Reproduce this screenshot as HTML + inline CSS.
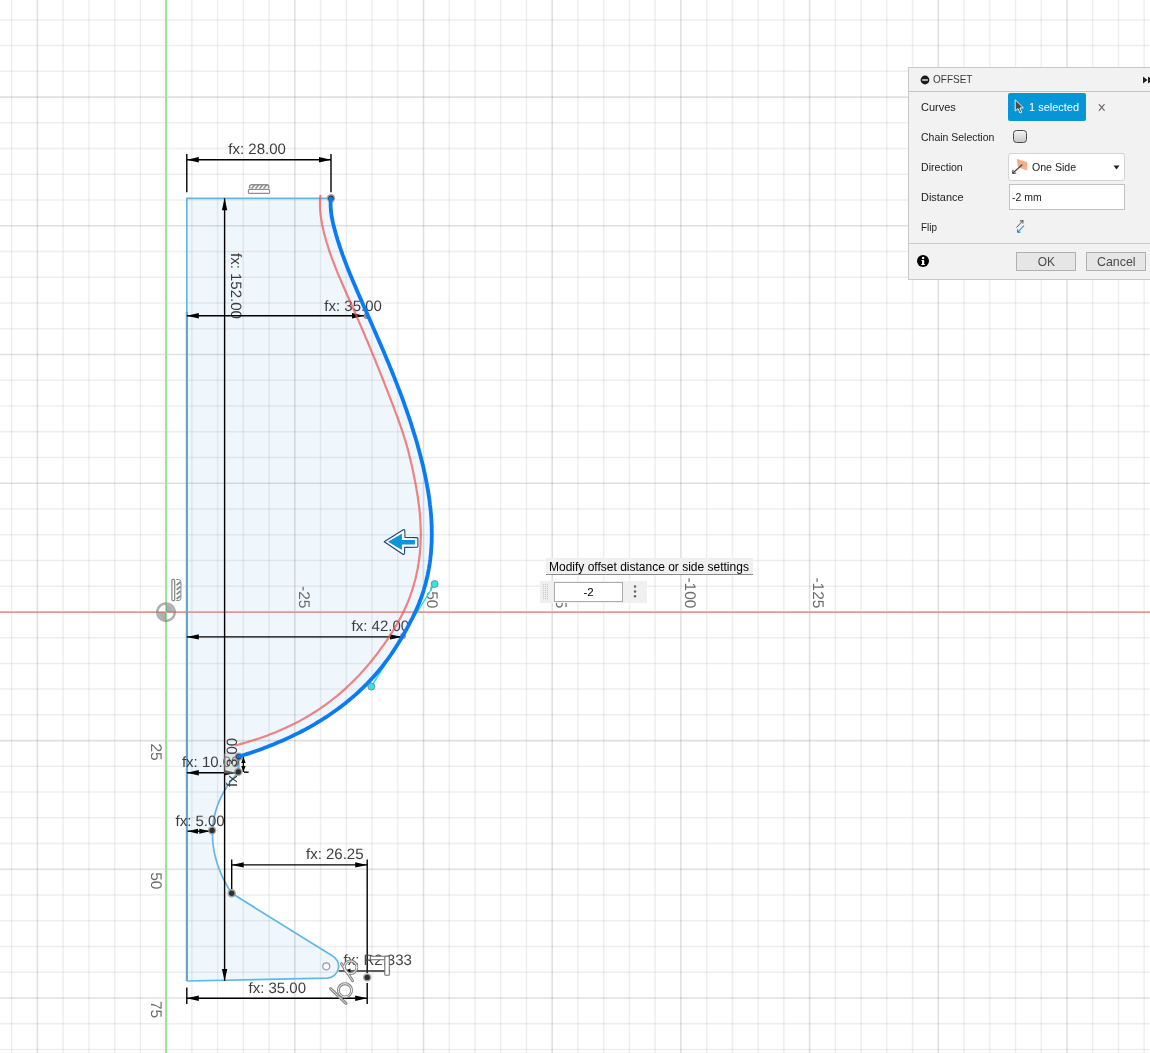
<!DOCTYPE html>
<html><head><meta charset="utf-8"><title>Offset sketch</title>
<style>
html,body{margin:0;padding:0;background:#fff;}
body{width:1150px;height:1053px;overflow:hidden;position:relative;font-family:"Liberation Sans",sans-serif;}
svg#cv{position:absolute;left:0;top:0;}
svg text{text-rendering:geometricPrecision}
#wrap{position:absolute;left:0;top:0;width:1150px;height:1053px;will-change:opacity;overflow:hidden}
.gm{stroke:#000;stroke-opacity:0.066;stroke-width:1.5}
.gM{stroke:#000;stroke-opacity:0.12;stroke-width:1.6}
.dim{stroke:#000;stroke-width:1.4;fill:none}
.dimt{font-family:"Liberation Sans",sans-serif;font-size:15px;fill:#3c3c3c}
.rul{font-family:"Liberation Sans",sans-serif;font-size:15.5px;fill:#6c6c6c}
.sk{stroke:#60b8e8;stroke-width:1.7;fill:none}
#panel{position:absolute;left:908px;top:67px;width:250px;height:213px;background:#f2f2f2;border:1px solid #c8c8c8;box-sizing:border-box;font-size:11.5px;color:#222;}
#panel .hd{height:24px;border-bottom:1px solid #c4c4c4;box-sizing:border-box;position:relative}
#panel .row{position:absolute;left:12px;}
.tip{position:absolute;left:546px;top:558px;width:207px;height:17px;background:#f0f0f0;border-bottom:1px solid #8a8a8a;box-sizing:border-box;font-size:12px;line-height:18px;color:#000;padding-left:3px;white-space:nowrap}
.hud{position:absolute;left:540px;top:581px;width:107px;height:22px;background:#f0f0f0}
.hud .in{position:absolute;left:14px;top:1px;width:69px;height:20px;box-sizing:border-box;border:1px solid #ababab;background:#fff;font-size:11.5px;line-height:19px;text-align:center;color:#000}
</style></head><body>
<div id="wrap">
<svg id="cv" width="1150" height="1053" viewBox="0 0 1150 1053">

<!-- profile fill -->
<path d="M186.8 198.3 L331 198.3 330.8 198.4 L330.6 201.5 L330.6 204.5 L330.7 207.6 L330.9 210.6 L331.3 213.7 L331.7 216.7 L332.3 219.7 L332.9 222.7 L333.6 225.6 L334.4 228.6 L335.2 231.5 L336.0 234.5 L336.9 237.4 L337.7 240.3 L338.7 243.2 L339.6 246.1 L340.6 249.0 L341.6 251.9 L342.6 254.8 L343.7 257.7 L344.7 260.5 L345.8 263.4 L346.9 266.2 L348.0 269.1 L349.2 271.9 L350.3 274.8 L351.5 277.6 L352.7 280.4 L353.9 283.2 L355.1 286.1 L356.3 288.9 L357.5 291.7 L358.7 294.5 L359.9 297.3 L361.2 300.1 L362.4 302.9 L363.6 305.7 L364.8 308.5 L366.1 311.3 L367.3 314.1 L368.5 316.9 L369.8 319.7 L371.0 322.5 L372.2 325.3 L373.4 328.1 L374.7 330.9 L375.9 333.7 L377.1 336.5 L378.3 339.3 L379.5 342.1 L380.8 344.9 L382.0 347.7 L383.2 350.5 L384.4 353.3 L385.5 356.1 L386.7 359.0 L387.9 361.8 L389.1 364.6 L390.2 367.4 L391.4 370.2 L392.5 373.1 L393.7 375.9 L394.8 378.7 L395.9 381.6 L397.0 384.4 L398.1 387.3 L399.2 390.1 L400.3 393.0 L401.4 395.9 L402.4 398.7 L403.5 401.6 L404.5 404.5 L405.5 407.4 L406.5 410.2 L407.5 413.1 L408.5 416.0 L409.5 418.9 L410.5 421.8 L411.4 424.7 L412.3 427.7 L413.2 430.6 L414.1 433.5 L415.0 436.4 L415.9 439.3 L416.8 442.3 L417.6 445.2 L418.4 448.2 L419.2 451.1 L420.0 454.1 L420.8 457.0 L421.5 460.0 L422.3 463.0 L423.0 465.9 L423.7 468.9 L424.3 471.9 L425.0 474.9 L425.6 477.9 L426.2 480.9 L426.8 483.9 L427.3 486.9 L427.9 489.9 L428.4 492.9 L428.8 495.9 L429.3 499.0 L429.7 502.0 L430.0 505.0 L430.4 508.0 L430.7 511.1 L431.0 514.1 L431.2 517.2 L431.4 520.2 L431.5 523.2 L431.7 526.3 L431.7 529.3 L431.8 532.4 L431.8 535.4 L431.7 538.5 L431.7 541.6 L431.5 544.6 L431.3 547.7 L431.1 550.8 L430.9 553.8 L430.5 556.9 L430.2 559.9 L429.8 563.0 L429.3 566.0 L428.8 569.0 L428.2 572.1 L427.6 575.1 L426.9 578.1 L426.2 581.0 L425.5 584.0 L424.6 586.9 L423.8 589.8 L422.9 592.7 L421.9 595.6 L420.9 598.5 L419.8 601.3 L418.7 604.2 L417.5 607.0 L416.3 609.7 L415.0 612.5 L413.7 615.3 L412.4 618.0 L411.0 620.7 L409.6 623.4 L408.2 626.1 L406.7 628.8 L405.2 631.5 L403.7 634.2 L402.2 636.9 L400.6 639.5 L399.1 642.1 L397.4 644.7 L395.8 647.3 L394.1 649.9 L392.4 652.5 L390.7 655.0 L388.9 657.5 L387.1 660.0 L385.3 662.4 L383.5 664.9 L381.6 667.3 L379.6 669.6 L377.7 672.0 L375.7 674.3 L373.7 676.6 L371.6 678.8 L369.5 681.1 L367.4 683.3 L365.3 685.4 L363.1 687.6 L360.9 689.7 L358.7 691.8 L356.4 693.8 L354.1 695.9 L351.8 697.9 L349.5 699.8 L347.1 701.8 L344.7 703.7 L342.3 705.5 L339.9 707.4 L337.4 709.2 L334.9 711.0 L332.4 712.8 L329.9 714.5 L327.4 716.2 L324.8 717.9 L322.3 719.5 L319.7 721.1 L317.0 722.7 L314.4 724.3 L311.8 725.8 L309.1 727.3 L306.4 728.8 L303.7 730.3 L301.0 731.7 L298.3 733.1 L295.5 734.4 L292.8 735.8 L290.0 737.1 L287.2 738.4 L284.4 739.7 L281.6 740.9 L278.8 742.1 L276.0 743.3 L273.2 744.5 L270.3 745.6 L267.5 746.8 L264.6 747.8 L261.8 748.9 L258.9 750.0 L256.0 751.0 L253.1 752.0 L250.2 753.0 L247.4 753.9 L244.5 754.8 L241.6 755.7 L238.6 756.6 L238.8 771.5 239.1 771.6 L237.5 773.3 L235.9 775.0 L234.4 776.7 L232.9 778.5 L231.5 780.3 L230.1 782.1 L228.8 783.9 L227.5 785.8 L226.2 787.7 L225.1 789.6 L223.9 791.6 L222.8 793.6 L221.8 795.6 L220.8 797.6 L219.9 799.6 L219.0 801.7 L218.2 803.7 L217.4 805.8 L216.7 807.9 L216.0 810.1 L215.4 812.2 L214.9 814.3 L214.4 816.5 L213.9 818.7 L213.5 820.9 L213.2 823.0 L213.0 825.2 L212.7 827.5 L212.6 829.7 L212.5 831.9 L212.5 834.1 L212.5 836.3 L212.6 838.6 L212.7 840.8 L212.9 843.0 L213.2 845.2 L213.5 847.5 L213.8 849.7 L214.2 851.9 L214.7 854.1 L215.2 856.3 L215.8 858.5 L216.4 860.7 L217.0 862.8 L217.7 865.0 L218.5 867.1 L219.2 869.3 L220.1 871.4 L221.0 873.5 L221.9 875.6 L222.8 877.6 L223.8 879.7 L224.9 881.7 L225.9 883.7 L227.1 885.7 L228.2 887.6 L229.4 889.5 L230.6 891.4 L231.9 893.3 L331.8 955.4 A12 12 0 0 1 327.5 978.2 L186.8 981 Z" fill="#eff7fd" stroke="none"/>
<g id="grid" shape-rendering="auto">
<line x1="11.66" y1="0" x2="11.66" y2="1053" class="gm"/>
<line x1="37.40" y1="0" x2="37.40" y2="1053" class="gM"/>
<line x1="63.14" y1="0" x2="63.14" y2="1053" class="gm"/>
<line x1="88.88" y1="0" x2="88.88" y2="1053" class="gm"/>
<line x1="114.62" y1="0" x2="114.62" y2="1053" class="gm"/>
<line x1="140.36" y1="0" x2="140.36" y2="1053" class="gm"/>
<line x1="191.84" y1="0" x2="191.84" y2="1053" class="gm"/>
<line x1="217.58" y1="0" x2="217.58" y2="1053" class="gm"/>
<line x1="243.32" y1="0" x2="243.32" y2="1053" class="gm"/>
<line x1="269.06" y1="0" x2="269.06" y2="1053" class="gm"/>
<line x1="294.80" y1="0" x2="294.80" y2="1053" class="gM"/>
<line x1="320.54" y1="0" x2="320.54" y2="1053" class="gm"/>
<line x1="346.28" y1="0" x2="346.28" y2="1053" class="gm"/>
<line x1="372.02" y1="0" x2="372.02" y2="1053" class="gm"/>
<line x1="397.76" y1="0" x2="397.76" y2="1053" class="gm"/>
<line x1="423.50" y1="0" x2="423.50" y2="1053" class="gM"/>
<line x1="449.24" y1="0" x2="449.24" y2="1053" class="gm"/>
<line x1="474.98" y1="0" x2="474.98" y2="1053" class="gm"/>
<line x1="500.72" y1="0" x2="500.72" y2="1053" class="gm"/>
<line x1="526.46" y1="0" x2="526.46" y2="1053" class="gm"/>
<line x1="552.20" y1="0" x2="552.20" y2="1053" class="gM"/>
<line x1="577.94" y1="0" x2="577.94" y2="1053" class="gm"/>
<line x1="603.68" y1="0" x2="603.68" y2="1053" class="gm"/>
<line x1="629.42" y1="0" x2="629.42" y2="1053" class="gm"/>
<line x1="655.16" y1="0" x2="655.16" y2="1053" class="gm"/>
<line x1="680.90" y1="0" x2="680.90" y2="1053" class="gM"/>
<line x1="706.64" y1="0" x2="706.64" y2="1053" class="gm"/>
<line x1="732.38" y1="0" x2="732.38" y2="1053" class="gm"/>
<line x1="758.12" y1="0" x2="758.12" y2="1053" class="gm"/>
<line x1="783.86" y1="0" x2="783.86" y2="1053" class="gm"/>
<line x1="809.60" y1="0" x2="809.60" y2="1053" class="gM"/>
<line x1="835.34" y1="0" x2="835.34" y2="1053" class="gm"/>
<line x1="861.08" y1="0" x2="861.08" y2="1053" class="gm"/>
<line x1="886.82" y1="0" x2="886.82" y2="1053" class="gm"/>
<line x1="912.56" y1="0" x2="912.56" y2="1053" class="gm"/>
<line x1="938.30" y1="0" x2="938.30" y2="1053" class="gM"/>
<line x1="964.04" y1="0" x2="964.04" y2="1053" class="gm"/>
<line x1="989.78" y1="0" x2="989.78" y2="1053" class="gm"/>
<line x1="1015.52" y1="0" x2="1015.52" y2="1053" class="gm"/>
<line x1="1041.26" y1="0" x2="1041.26" y2="1053" class="gm"/>
<line x1="1067.00" y1="0" x2="1067.00" y2="1053" class="gM"/>
<line x1="1092.74" y1="0" x2="1092.74" y2="1053" class="gm"/>
<line x1="1118.48" y1="0" x2="1118.48" y2="1053" class="gm"/>
<line x1="1144.22" y1="0" x2="1144.22" y2="1053" class="gm"/>
<line x1="0" y1="19.88" x2="1150" y2="19.88" class="gm"/>
<line x1="0" y1="45.62" x2="1150" y2="45.62" class="gm"/>
<line x1="0" y1="71.36" x2="1150" y2="71.36" class="gm"/>
<line x1="0" y1="97.10" x2="1150" y2="97.10" class="gM"/>
<line x1="0" y1="122.84" x2="1150" y2="122.84" class="gm"/>
<line x1="0" y1="148.58" x2="1150" y2="148.58" class="gm"/>
<line x1="0" y1="174.32" x2="1150" y2="174.32" class="gm"/>
<line x1="0" y1="200.06" x2="1150" y2="200.06" class="gm"/>
<line x1="0" y1="225.80" x2="1150" y2="225.80" class="gM"/>
<line x1="0" y1="251.54" x2="1150" y2="251.54" class="gm"/>
<line x1="0" y1="277.28" x2="1150" y2="277.28" class="gm"/>
<line x1="0" y1="303.02" x2="1150" y2="303.02" class="gm"/>
<line x1="0" y1="328.76" x2="1150" y2="328.76" class="gm"/>
<line x1="0" y1="354.50" x2="1150" y2="354.50" class="gM"/>
<line x1="0" y1="380.24" x2="1150" y2="380.24" class="gm"/>
<line x1="0" y1="405.98" x2="1150" y2="405.98" class="gm"/>
<line x1="0" y1="431.72" x2="1150" y2="431.72" class="gm"/>
<line x1="0" y1="457.46" x2="1150" y2="457.46" class="gm"/>
<line x1="0" y1="483.20" x2="1150" y2="483.20" class="gM"/>
<line x1="0" y1="508.94" x2="1150" y2="508.94" class="gm"/>
<line x1="0" y1="534.68" x2="1150" y2="534.68" class="gm"/>
<line x1="0" y1="560.42" x2="1150" y2="560.42" class="gm"/>
<line x1="0" y1="586.16" x2="1150" y2="586.16" class="gm"/>
<line x1="0" y1="637.64" x2="1150" y2="637.64" class="gm"/>
<line x1="0" y1="663.38" x2="1150" y2="663.38" class="gm"/>
<line x1="0" y1="689.12" x2="1150" y2="689.12" class="gm"/>
<line x1="0" y1="714.86" x2="1150" y2="714.86" class="gm"/>
<line x1="0" y1="740.60" x2="1150" y2="740.60" class="gM"/>
<line x1="0" y1="766.34" x2="1150" y2="766.34" class="gm"/>
<line x1="0" y1="792.08" x2="1150" y2="792.08" class="gm"/>
<line x1="0" y1="817.82" x2="1150" y2="817.82" class="gm"/>
<line x1="0" y1="843.56" x2="1150" y2="843.56" class="gm"/>
<line x1="0" y1="869.30" x2="1150" y2="869.30" class="gM"/>
<line x1="0" y1="895.04" x2="1150" y2="895.04" class="gm"/>
<line x1="0" y1="920.78" x2="1150" y2="920.78" class="gm"/>
<line x1="0" y1="946.52" x2="1150" y2="946.52" class="gm"/>
<line x1="0" y1="972.26" x2="1150" y2="972.26" class="gm"/>
<line x1="0" y1="998.00" x2="1150" y2="998.00" class="gM"/>
<line x1="0" y1="1023.74" x2="1150" y2="1023.74" class="gm"/>
<line x1="0" y1="1049.48" x2="1150" y2="1049.48" class="gm"/>
</g>
<!-- axes -->
<line x1="0" y1="612" x2="1150" y2="612" stroke="#eb9393" stroke-width="1.75"/>
<line x1="166" y1="0" x2="166" y2="1053" stroke="#98e898" stroke-width="2.1"/>
<!-- ruler labels -->
<g class="rul">
<text transform="translate(298.6,586) rotate(90)">-25</text>
<text transform="translate(427.3,586) rotate(90)">-50</text>
<text transform="translate(556,586) rotate(90)">-75</text>
<text transform="translate(684.7,577.4) rotate(90)">-100</text>
<text transform="translate(813.4,577.4) rotate(90)">-125</text>
<text transform="translate(150.8,743.5) rotate(90)">25</text>
<text transform="translate(150.8,872.2) rotate(90)">50</text>
<text transform="translate(150.8,1000.9) rotate(90)">75</text>
</g>
<!-- sketch lines -->
<path class="sk" d="M186.8 315 L186.8 198.3 L331 198.3"/>
<path d="M186.9 312 L186.9 981" stroke="#5fa7cd" stroke-width="2.2" fill="none"/>
<path class="sk" d="M239.1 771.6 L237.5 773.3 L235.9 775.0 L234.4 776.7 L232.9 778.5 L231.5 780.3 L230.1 782.1 L228.8 783.9 L227.5 785.8 L226.2 787.7 L225.1 789.6 L223.9 791.6 L222.8 793.6 L221.8 795.6 L220.8 797.6 L219.9 799.6 L219.0 801.7 L218.2 803.7 L217.4 805.8 L216.7 807.9 L216.0 810.1 L215.4 812.2 L214.9 814.3 L214.4 816.5 L213.9 818.7 L213.5 820.9 L213.2 823.0 L213.0 825.2 L212.7 827.5 L212.6 829.7 L212.5 831.9 L212.5 834.1 L212.5 836.3 L212.6 838.6 L212.7 840.8 L212.9 843.0 L213.2 845.2 L213.5 847.5 L213.8 849.7 L214.2 851.9 L214.7 854.1 L215.2 856.3 L215.8 858.5 L216.4 860.7 L217.0 862.8 L217.7 865.0 L218.5 867.1 L219.2 869.3 L220.1 871.4 L221.0 873.5 L221.9 875.6 L222.8 877.6 L223.8 879.7 L224.9 881.7 L225.9 883.7 L227.1 885.7 L228.2 887.6 L229.4 889.5 L230.6 891.4 L231.9 893.3"/>
<path class="sk" d="M231.7 893.3 L331.8 955.4 A12 12 0 0 1 327.5 978.2 L186.8 981"/>
<path class="sk" d="M238.8 756.7 L238.8 771.5"/>
<line class="dim" x1="186.8" y1="154.0" x2="186.8" y2="192.3"/>
<line class="dim" x1="331.0" y1="154.0" x2="331.0" y2="192.3"/>
<line class="dim" x1="186.8" y1="159.7" x2="331.0" y2="159.7"/><polygon points="186.8,159.7 198.8,157.0 198.8,162.4" fill="#000"/><polygon points="331.0,159.7 319.0,162.4 319.0,157.0" fill="#000"/>
<text class="dimt" x="228.3" y="154">fx: 28.00</text>
<line class="dim" x1="224.6" y1="198.3" x2="224.6" y2="981.0"/><polygon points="224.6,198.3 227.3,210.3 221.9,210.3" fill="#000"/><polygon points="224.6,981.0 221.9,969.0 227.3,969.0" fill="#000"/>
<text class="dimt" transform="translate(230.5,253) rotate(90)">fx: 152.00</text>
<line class="dim" x1="186.8" y1="315.8" x2="364.0" y2="315.8"/><polygon points="186.8,315.8 198.8,313.1 198.8,318.5" fill="#000"/><polygon points="364.0,315.8 352.0,318.5 352.0,313.1" fill="#000"/>
<text class="dimt" x="324.3" y="311">fx: 35.00</text>
<line class="dim" x1="186.8" y1="636.9" x2="402.0" y2="636.9"/><polygon points="186.8,636.9 198.8,634.2 198.8,639.6" fill="#000"/><polygon points="402.0,636.9 390.0,639.6 390.0,634.2" fill="#000"/>
<text class="dimt" x="351.6" y="630.8">fx: 42.00</text>
<line class="dim" x1="186.8" y1="772.8" x2="236.0" y2="772.8"/><polygon points="186.8,772.8 198.8,770.1 198.8,775.5" fill="#000"/><polygon points="236.0,772.8 224.0,775.5 224.0,770.1" fill="#000"/>
<text class="dimt" x="181.9" y="767">fx: 10.00</text>
<rect x="224.2" y="753.6" width="13.6" height="19.6" fill="#cfcfcf" fill-opacity="0.45" stroke="#777" stroke-opacity="0.5" stroke-width="0.6"/>
<text class="dimt" transform="translate(237,787) rotate(-90)">fx: 3.00</text>
<line class="dim" x1="243.4" y1="757" x2="243.4" y2="772" stroke-width="2"/>
<polygon points="243.4,757.0 245.6,763.0 241.2,763.0" fill="#000"/><polygon points="243.4,772.0 241.2,766.0 245.6,766.0" fill="#000"/>
<line class="dim" x1="244.0" y1="772.2" x2="248.6" y2="772.2"/>
<line class="dim" x1="187.5" y1="831.2" x2="209.5" y2="831.2"/><polygon points="187.5,831.2 198.0,828.7 198.0,833.7" fill="#000"/><polygon points="209.8,831.2 199.3,833.7 199.3,828.7" fill="#000"/>
<text class="dimt" x="175.5" y="826">fx: 5.00</text>
<line class="dim" x1="231.7" y1="859.6" x2="231.7" y2="889.0"/>
<line class="dim" x1="367.2" y1="859.6" x2="367.2" y2="973.0"/>
<line class="dim" x1="231.7" y1="864.9" x2="367.2" y2="864.9"/><polygon points="231.7,864.9 243.7,862.2 243.7,867.6" fill="#000"/><polygon points="367.2,864.9 355.2,867.6 355.2,862.2" fill="#000"/>
<text class="dimt" x="306" y="859">fx: 26.25</text>
<line class="dim" x1="186.8" y1="987.6" x2="186.8" y2="1004.0"/>
<line class="dim" x1="367.2" y1="983.0" x2="367.2" y2="1004.0"/>
<line class="dim" x1="186.8" y1="998.3" x2="367.2" y2="998.3"/><polygon points="186.8,998.3 198.8,995.6 198.8,1001.0" fill="#000"/><polygon points="367.2,998.3 355.2,1001.0 355.2,995.6" fill="#000"/>
<text class="dimt" x="248.5" y="992.5">fx: 35.00</text>
<line x1="338.7" y1="970.9" x2="390" y2="970.9" stroke="#2a2a2a" stroke-width="1.5"/>
<polygon points="343.5,970.9 350.5,968.6 350.5,973.2" fill="#111"/>
<text class="dimt" x="343.5" y="964.9" style="fill:#444">fx: R2.333</text>
<circle cx="326.3" cy="966.3" r="3.5" fill="#fafcff" stroke="#9a9a9a" stroke-width="1.2"/>
<g fill="none" stroke-linecap="round"><circle cx="350.6" cy="967.3" r="6.3" stroke="#848484" stroke-width="2.9"/><line x1="341.4" y1="963.6" x2="352.6" y2="980.8" stroke="#848484" stroke-width="2.9"/><circle cx="350.6" cy="967.3" r="6.3" stroke="#fff" stroke-width="0.9"/><line x1="341.4" y1="963.6" x2="352.6" y2="980.8" stroke="#fff" stroke-width="0.8"/></g>
<g fill="none" stroke-linecap="round"><circle cx="345.0" cy="990.3" r="6.6" stroke="#848484" stroke-width="2.9"/><line x1="330.6" y1="988.6" x2="346.0" y2="1003.4" stroke="#848484" stroke-width="2.9"/><circle cx="345.0" cy="990.3" r="6.6" stroke="#fff" stroke-width="0.9"/><line x1="330.6" y1="988.6" x2="346.0" y2="1003.4" stroke="#fff" stroke-width="0.8"/></g>
<circle cx="331.0" cy="198.3" r="4.2" fill="#8a8a8a" fill-opacity="0.75"/><circle cx="331.0" cy="198.3" r="2.7" fill="#2e2e2e"/>
<circle cx="238.8" cy="756.7" r="4.2" fill="#8a8a8a" fill-opacity="0.75"/><circle cx="238.8" cy="756.7" r="2.7" fill="#2e2e2e"/>
<circle cx="238.3" cy="771.9" r="4.2" fill="#8a8a8a" fill-opacity="0.75"/><circle cx="238.3" cy="771.9" r="2.7" fill="#2e2e2e"/>
<circle cx="212.1" cy="830.4" r="4.2" fill="#8a8a8a" fill-opacity="0.75"/><circle cx="212.1" cy="830.4" r="2.7" fill="#2e2e2e"/>
<circle cx="231.7" cy="893.3" r="4.2" fill="#8a8a8a" fill-opacity="0.75"/><circle cx="231.7" cy="893.3" r="2.7" fill="#2e2e2e"/>
<circle cx="367.2" cy="977.4" r="4.2" fill="#8a8a8a" fill-opacity="0.75"/><circle cx="367.2" cy="977.4" r="2.7" fill="#2e2e2e"/>
<circle cx="366.5" cy="316" r="3" fill="#555" fill-opacity="0.6"/>
<circle cx="403" cy="636" r="3" fill="#555" fill-opacity="0.6"/>
<g fill="#7c7c7c" fill-opacity="0.6" stroke="none"><path fill-rule="evenodd" d="M166 602.2 a10 10 0 1 0 0.01 0 Z M166 604.8 a7.4 7.4 0 1 1 -0.01 0 Z"/><path d="M166 612.2 L166 604.8 A7.4 7.4 0 0 1 173.4 612.2 Z"/><path d="M166 612.2 L166 619.6 A7.4 7.4 0 0 1 158.6 612.2 Z"/></g>
<g stroke="#8e8e8e" fill="none" stroke-width="1.15"><rect x="248.4" y="189.4" width="21.2" height="4" rx="1" fill="#fff"/><path d="M249.6 188.6 v-2.6 q0.6-1.2 1.8-1.2 h15.8 q1.4 0 1.4 1.4 v2.4 M251.5 188.6 l3.4-3.6 M255.5 188.6 l3.4-3.6 M259.5 188.6 l3.4-3.6 M263.5 188.6 l3.4-3.6" stroke-width="1.5"/></g>
<g stroke="#868686" fill="none" stroke-width="1.2"><rect x="171.9" y="579.4" width="2.8" height="21.2" rx="1" fill="#fff"/><path d="M176.3 579.5 h2.4 q2.2 0.3 2.2 2 v17 q0 1.8 -2.2 2 h-2.4" stroke-width="1"/><path d="M176.6 585.2 l3.8-3.2 M176.6 589.8 l3.8-3.2 M176.6 594.4 l3.8-3.2 M176.6 599 l3.8-3.2" stroke-width="1.7"/></g>
<g stroke="#6e6e6e" fill="#fff" stroke-width="1.1"><rect x="370.3" y="956.2" width="19" height="3.6" rx="0.8"/><rect x="384.8" y="956.2" width="4.5" height="19" rx="0.8"/></g>
<!-- red offset preview -->
<path d="M320.5 194.9 L320.2 197.9 L320.0 201.0 L320.0 204.0 L320.0 207.0 L320.2 210.0 L320.4 213.0 L320.8 216.0 L321.2 219.0 L321.7 221.9 L322.2 224.9 L322.9 227.8 L323.5 230.7 L324.2 233.6 L325.0 236.5 L325.8 239.4 L326.6 242.3 L327.5 245.2 L328.4 248.0 L329.3 250.9 L330.3 253.7 L331.3 256.5 L332.3 259.4 L333.4 262.2 L334.5 265.0 L335.6 267.8 L336.7 270.6 L337.8 273.4 L339.0 276.1 L340.2 278.9 L341.4 281.7 L342.6 284.5 L343.8 287.2 L345.0 290.0 L346.2 292.8 L347.4 295.5 L348.7 298.3 L349.9 301.1 L351.1 303.8 L352.3 306.6 L353.6 309.3 L354.8 312.1 L356.0 314.9 L357.2 317.6 L358.4 320.4 L359.6 323.2 L360.8 325.9 L362.0 328.7 L363.2 331.5 L364.4 334.2 L365.5 337.0 L366.7 339.8 L367.9 342.5 L369.0 345.3 L370.2 348.1 L371.3 350.9 L372.5 353.6 L373.6 356.4 L374.8 359.2 L375.9 362.0 L377.0 364.8 L378.2 367.6 L379.3 370.3 L380.4 373.1 L381.5 375.9 L382.6 378.7 L383.7 381.5 L384.8 384.3 L385.9 387.1 L387.0 389.9 L388.1 392.7 L389.2 395.5 L390.3 398.3 L391.3 401.1 L392.4 403.9 L393.5 406.7 L394.5 409.5 L395.6 412.4 L396.6 415.2 L397.7 418.0 L398.7 420.8 L399.7 423.7 L400.7 426.5 L401.7 429.3 L402.6 432.2 L403.5 435.0 L404.4 437.9 L405.3 440.7 L406.2 443.6 L407.0 446.5 L407.8 449.4 L408.6 452.3 L409.3 455.2 L410.0 458.1 L410.7 461.0 L411.4 463.9 L412.1 466.9 L412.7 469.8 L413.3 472.7 L413.9 475.7 L414.5 478.6 L415.1 481.6 L415.7 484.6 L416.2 487.6 L416.7 490.5 L417.2 493.5 L417.7 496.5 L418.1 499.5 L418.5 502.5 L418.9 505.5 L419.3 508.5 L419.6 511.5 L419.9 514.5 L420.1 517.5 L420.3 520.5 L420.5 523.5 L420.6 526.5 L420.7 529.5 L420.8 532.5 L420.8 535.6 L420.7 538.6 L420.6 541.6 L420.5 544.6 L420.3 547.6 L420.1 550.6 L419.8 553.6 L419.5 556.5 L419.1 559.5 L418.7 562.5 L418.2 565.5 L417.7 568.4 L417.1 571.4 L416.5 574.3 L415.8 577.2 L415.1 580.1 L414.3 583.0 L413.5 585.9 L412.6 588.8 L411.7 591.7 L410.7 594.5 L409.7 597.3 L408.6 600.1 L407.5 602.9 L406.3 605.7 L405.1 608.4 L403.8 611.2 L402.5 613.9 L401.1 616.5 L399.7 619.2 L398.3 621.8 L396.8 624.5 L395.2 627.1 L393.7 629.6 L392.1 632.2 L390.4 634.7 L388.8 637.3 L387.1 639.8 L385.4 642.3 L383.7 644.8 L381.9 647.2 L380.2 649.7 L378.4 652.1 L376.6 654.5 L374.7 656.9 L372.9 659.2 L371.0 661.6 L369.1 663.9 L367.1 666.2 L365.1 668.5 L363.1 670.7 L361.1 673.0 L359.1 675.2 L357.0 677.4 L354.9 679.5 L352.8 681.6 L350.6 683.7 L348.4 685.8 L346.2 687.9 L344.0 689.9 L341.7 691.9 L339.5 693.8 L337.2 695.8 L334.8 697.7 L332.5 699.5 L330.1 701.4 L327.7 703.2 L325.3 705.0 L322.8 706.7 L320.3 708.4 L317.8 710.1 L315.3 711.7 L312.8 713.3 L310.2 714.9 L307.6 716.5 L305.0 718.0 L302.4 719.4 L299.8 720.9 L297.1 722.3 L294.4 723.7 L291.7 725.0 L289.0 726.3 L286.3 727.6 L283.5 728.8 L280.8 730.0 L278.0 731.2 L275.2 732.4 L272.4 733.5 L269.6 734.6 L266.8 735.7 L263.9 736.7 L261.1 737.7 L258.2 738.7 L255.4 739.6 L252.5 740.5 L249.6 741.4 L246.7 742.3 L243.9 743.1 L241.0 743.9 L238.1 744.7 L235.2 745.4" stroke="#ee5050" stroke-opacity="0.7" stroke-width="2.2" fill="none"/>
<line x1="434.5" y1="584" x2="402.6" y2="636" stroke="#10e4e4" stroke-width="1.3"/><line x1="402.6" y1="636" x2="371.4" y2="686.6" stroke="#10e4e4" stroke-width="1.3"/>
<!-- selected blue spline -->
<path d="M330.8 198.4 L330.6 201.5 L330.6 204.5 L330.7 207.6 L330.9 210.6 L331.3 213.7 L331.7 216.7 L332.3 219.7 L332.9 222.7 L333.6 225.6 L334.4 228.6 L335.2 231.5 L336.0 234.5 L336.9 237.4 L337.7 240.3 L338.7 243.2 L339.6 246.1 L340.6 249.0 L341.6 251.9 L342.6 254.8 L343.7 257.7 L344.7 260.5 L345.8 263.4 L346.9 266.2 L348.0 269.1 L349.2 271.9 L350.3 274.8 L351.5 277.6 L352.7 280.4 L353.9 283.2 L355.1 286.1 L356.3 288.9 L357.5 291.7 L358.7 294.5 L359.9 297.3 L361.2 300.1 L362.4 302.9 L363.6 305.7 L364.8 308.5 L366.1 311.3 L367.3 314.1 L368.5 316.9 L369.8 319.7 L371.0 322.5 L372.2 325.3 L373.4 328.1 L374.7 330.9 L375.9 333.7 L377.1 336.5 L378.3 339.3 L379.5 342.1 L380.8 344.9 L382.0 347.7 L383.2 350.5 L384.4 353.3 L385.5 356.1 L386.7 359.0 L387.9 361.8 L389.1 364.6 L390.2 367.4 L391.4 370.2 L392.5 373.1 L393.7 375.9 L394.8 378.7 L395.9 381.6 L397.0 384.4 L398.1 387.3 L399.2 390.1 L400.3 393.0 L401.4 395.9 L402.4 398.7 L403.5 401.6 L404.5 404.5 L405.5 407.4 L406.5 410.2 L407.5 413.1 L408.5 416.0 L409.5 418.9 L410.5 421.8 L411.4 424.7 L412.3 427.7 L413.2 430.6 L414.1 433.5 L415.0 436.4 L415.9 439.3 L416.8 442.3 L417.6 445.2 L418.4 448.2 L419.2 451.1 L420.0 454.1 L420.8 457.0 L421.5 460.0 L422.3 463.0 L423.0 465.9 L423.7 468.9 L424.3 471.9 L425.0 474.9 L425.6 477.9 L426.2 480.9 L426.8 483.9 L427.3 486.9 L427.9 489.9 L428.4 492.9 L428.8 495.9 L429.3 499.0 L429.7 502.0 L430.0 505.0 L430.4 508.0 L430.7 511.1 L431.0 514.1 L431.2 517.2 L431.4 520.2 L431.5 523.2 L431.7 526.3 L431.7 529.3 L431.8 532.4 L431.8 535.4 L431.7 538.5 L431.7 541.6 L431.5 544.6 L431.3 547.7 L431.1 550.8 L430.9 553.8 L430.5 556.9 L430.2 559.9 L429.8 563.0 L429.3 566.0 L428.8 569.0 L428.2 572.1 L427.6 575.1 L426.9 578.1 L426.2 581.0 L425.5 584.0 L424.6 586.9 L423.8 589.8 L422.9 592.7 L421.9 595.6 L420.9 598.5 L419.8 601.3 L418.7 604.2 L417.5 607.0 L416.3 609.7 L415.0 612.5 L413.7 615.3 L412.4 618.0 L411.0 620.7 L409.6 623.4 L408.2 626.1 L406.7 628.8 L405.2 631.5 L403.7 634.2 L402.2 636.9 L400.6 639.5 L399.1 642.1 L397.4 644.7 L395.8 647.3 L394.1 649.9 L392.4 652.5 L390.7 655.0 L388.9 657.5 L387.1 660.0 L385.3 662.4 L383.5 664.9 L381.6 667.3 L379.6 669.6 L377.7 672.0 L375.7 674.3 L373.7 676.6 L371.6 678.8 L369.5 681.1 L367.4 683.3 L365.3 685.4 L363.1 687.6 L360.9 689.7 L358.7 691.8 L356.4 693.8 L354.1 695.9 L351.8 697.9 L349.5 699.8 L347.1 701.8 L344.7 703.7 L342.3 705.5 L339.9 707.4 L337.4 709.2 L334.9 711.0 L332.4 712.8 L329.9 714.5 L327.4 716.2 L324.8 717.9 L322.3 719.5 L319.7 721.1 L317.0 722.7 L314.4 724.3 L311.8 725.8 L309.1 727.3 L306.4 728.8 L303.7 730.3 L301.0 731.7 L298.3 733.1 L295.5 734.4 L292.8 735.8 L290.0 737.1 L287.2 738.4 L284.4 739.7 L281.6 740.9 L278.8 742.1 L276.0 743.3 L273.2 744.5 L270.3 745.6 L267.5 746.8 L264.6 747.8 L261.8 748.9 L258.9 750.0 L256.0 751.0 L253.1 752.0 L250.2 753.0 L247.4 753.9 L244.5 754.8 L241.6 755.7 L238.6 756.6" stroke="#0b7bf5" stroke-width="3.8" fill="none" stroke-linecap="round"/>
<circle cx="434.6" cy="584" r="3.5" fill="#30e6e6" stroke="#6f8a8c" stroke-width="0.9"/>
<circle cx="371.4" cy="686.6" r="3.5" fill="#30e6e6" stroke="#6f8a8c" stroke-width="0.9"/>
<path d="M384.2 541.7 L403.3 529.7 Q404.7 529.2 404.8 530.7 L405 537.4 L416.9 537.6 Q417.9 537.7 417.9 538.7 L417.9 546.1 Q417.9 547.1 416.9 547.2 L404.7 547.4 L404.5 553.3 Q404.3 554.8 402.9 554.2 Z" fill="#fff" stroke="#1d4475" stroke-width="1.1" stroke-linejoin="round"/>
<path d="M388 541.7 L401.9 533.8 L401.9 540 L414.9 540 L414.9 544.6 L401.9 544.6 L401.9 550 Z" fill="#0a96d8"/>
</svg>
<style>.btn{position:absolute;top:184px;width:60px;height:19px;box-sizing:border-box;border:1px solid #b0b0b0;background:#e6e6e6;font-size:13px;line-height:17px;text-align:center;color:#4a4a4a}.sx{display:inline-block;transform-origin:left center;white-space:nowrap}</style>
<div class="tip"><span class="sx" style="transform:scaleX(1)">Modify offset distance or side settings</span></div>
<div class="hud"><svg width="14" height="21" style="position:absolute;left:0;top:0"><g fill="#cdcdcd"><circle cx="3.5" cy="3.5" r="0.65"/><circle cx="5.5" cy="3.5" r="0.65"/><circle cx="7.5" cy="3.5" r="0.65"/><circle cx="3.5" cy="5.5" r="0.65"/><circle cx="5.5" cy="5.5" r="0.65"/><circle cx="7.5" cy="5.5" r="0.65"/><circle cx="3.5" cy="7.5" r="0.65"/><circle cx="5.5" cy="7.5" r="0.65"/><circle cx="7.5" cy="7.5" r="0.65"/><circle cx="3.5" cy="9.5" r="0.65"/><circle cx="5.5" cy="9.5" r="0.65"/><circle cx="7.5" cy="9.5" r="0.65"/><circle cx="3.5" cy="11.5" r="0.65"/><circle cx="5.5" cy="11.5" r="0.65"/><circle cx="7.5" cy="11.5" r="0.65"/><circle cx="3.5" cy="13.5" r="0.65"/><circle cx="5.5" cy="13.5" r="0.65"/><circle cx="7.5" cy="13.5" r="0.65"/><circle cx="3.5" cy="15.5" r="0.65"/><circle cx="5.5" cy="15.5" r="0.65"/><circle cx="7.5" cy="15.5" r="0.65"/><circle cx="3.5" cy="17.5" r="0.65"/><circle cx="5.5" cy="17.5" r="0.65"/><circle cx="7.5" cy="17.5" r="0.65"/></g></svg><div class="in"><span class="sx" style="transform:scaleX(1);transform-origin:center">-2</span></div><svg width="10" height="21" style="position:absolute;left:90px;top:0"><g fill="#666"><circle cx="5" cy="5.6" r="1.25"/><circle cx="5" cy="10.4" r="1.25"/><circle cx="5" cy="15.2" r="1.25"/></g></svg></div>
<div id="panel">
 <div class="hd"><svg width="12" height="12" style="position:absolute;left:9.5px;top:6px"><circle cx="6" cy="6" r="4.4" fill="#1a1a1a"/><rect x="3.2" y="5.3" width="5.6" height="1.4" fill="#f2f2f2"/></svg><span class="sx" style="position:absolute;left:24px;top:5px;font-size:11.5px;color:#3a3a3a;transform:scaleX(.87)">OFFSET</span><svg width="10" height="10" style="position:absolute;left:233px;top:7px"><path d="M1 1.5 L5.5 5 L1 8.5 Z M6 1.5 L10.5 5 L6 8.5 Z" fill="#222"/></svg></div>
 <span class="row sx" style="top:33px;transform:scaleX(.955)">Curves</span>
 <div style="position:absolute;left:99px;top:25px;width:78px;height:28px;background:#0696d7;border-radius:2px;color:#fff;font-size:11.5px;line-height:28px;"><svg width="12" height="16" style="position:absolute;left:6px;top:6px"><path d="M1.2 0.8 L1.2 12 L4 9.6 L6 14 L7.8 13.2 L5.9 9 L9.4 8.8 Z" fill="#4a4a4a" stroke="#fff" stroke-width="0.9"/></svg><span class="sx" style="position:absolute;left:21px;transform:scaleX(.955)">1 selected</span></div>
 <span style="position:absolute;left:188px;top:30.5px;font-size:16px;color:#6a6a6a;font-weight:normal;transform:scaleX(.9)">×</span>
 <span class="row sx" style="top:63px;transform:scaleX(.91)">Chain Selection</span>
 <div style="position:absolute;left:104px;top:62px;width:14px;height:13px;border:1.5px solid #484848;border-radius:3.5px;background:linear-gradient(#f4f4f4,#c6c6c6);box-sizing:border-box"></div>
 <span class="row sx" style="top:93px;transform:scaleX(.92)">Direction</span>
 <div style="position:absolute;left:99px;top:85px;width:117px;height:28px;background:#fff;border:1px solid #d4d4d4;border-radius:3px;box-sizing:border-box"><svg width="18" height="18" style="position:absolute;left:2px;top:4px"><path d="M6.1 1.2 L16.1 4.6 L15.6 12 L7.3 8.9 Z" fill="#f3b088" stroke="#eaa078" stroke-width="0.5"/><path d="M2 15 L11.3 6.5" stroke="#444" stroke-width="1.2" fill="none"/><path d="M1.5 15.5 L2 11.8 M1.5 15.5 L5.2 15" stroke="#444" stroke-width="1.1" fill="none"/></svg><span class="sx" style="position:absolute;left:23px;top:7px;transform:scaleX(.92)">One Side</span><svg width="8" height="6" style="position:absolute;left:104px;top:11px"><path d="M0.5 0.5 L6.5 0.5 L3.5 4.5 Z" fill="#222"/></svg></div>
 <span class="row sx" style="top:123px;transform:scaleX(.95)">Distance</span>
 <div style="position:absolute;left:100px;top:116px;width:116px;height:26px;background:#fff;border:1px solid #c2c2c2;box-sizing:border-box"><span class="sx" style="position:absolute;left:2px;top:6px;transform:scaleX(.91)">-2 mm</span></div>
 <span class="row sx" style="top:153px;transform:scaleX(.86)">Flip</span>
 <svg width="14" height="16" style="position:absolute;left:104px;top:151px"><path d="M3.5 8.5 L10 1.5 M10 1.5 L6.8 2 M10 1.5 L9.8 4.6" stroke="#555" stroke-width="1" fill="none"/><path d="M11 6.5 L4.5 13.5 M4.5 13.5 L7.8 13 M4.5 13.5 L4.7 10.3" stroke="#1a8de0" stroke-width="1.1" fill="none"/></svg>
 <div style="position:absolute;left:0;top:175px;width:250px;border-top:1px solid #c8c8c8"></div>
 <svg width="14" height="14" style="position:absolute;left:7px;top:186px"><circle cx="7" cy="7" r="6" fill="#000"/><rect x="6" y="6" width="2.2" height="4.5" fill="#fff"/><circle cx="7.1" cy="4" r="1.2" fill="#fff"/><rect x="5.3" y="6" width="2" height="1" fill="#fff"/><rect x="5.3" y="10" width="3.6" height="1" fill="#fff"/></svg>
 <div class="btn" style="left:107px"><span class="sx" style="transform:scaleX(.92);transform-origin:center">OK</span></div>
 <div class="btn" style="left:177px"><span class="sx" style="transform:scaleX(.955);transform-origin:center">Cancel</span></div>
</div>

</div>
</body></html>
